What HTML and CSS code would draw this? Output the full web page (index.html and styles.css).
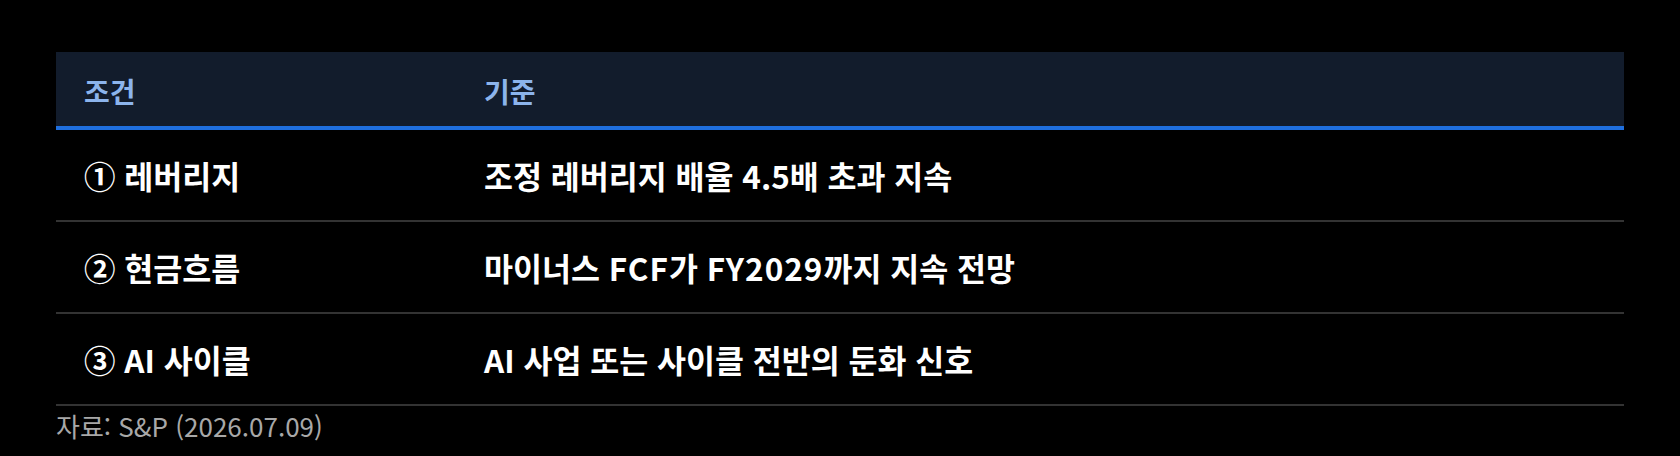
FILE: index.html
```html
<!DOCTYPE html>
<html lang="ko">
<head>
<meta charset="utf-8">
<title>조건 기준</title>
<link rel="stylesheet" href="styles.css">
</head>
<body>
<div class="wrap">
  <div class="table">
    <div class="row head">
      <div class="cell">조건</div>
      <div class="cell">기준</div>
    </div>
    <div class="row">
      <div class="cell">① 레버리지</div>
      <div class="cell">조정 레버리지 배율 4.5배 초과 지속</div>
    </div>
    <div class="row">
      <div class="cell">② 현금흐름</div>
      <div class="cell">마이너스 <span class="latin">FCF</span>가 <span class="latin">FY2029</span>까지 지속 전망</div>
    </div>
    <div class="row">
      <div class="cell">③ AI 사이클</div>
      <div class="cell">AI 사업 또는 사이클 전반의 둔화 신호</div>
    </div>
  </div>
  <p class="source">자료: S&amp;P (2026.07.09)</p>
</div>
</body>
</html>
```
FILE: styles.css
```css
html, body {
  margin: 0;
  padding: 0;
  background: #000;
}
body {
  font-family: "Noto Sans CJK KR", "Noto Sans", sans-serif;
  color: #fff;
}
.wrap {
  padding: 52px 56px 0;
}
.table {
  display: flex;
  flex-direction: column;
}
.row {
  display: grid;
  grid-template-columns: 400px 1fr;
  height: 90px;
  align-items: center;
  border-bottom: 2px solid #333;
  font-size: 31.5px;
  line-height: 40px;
  font-weight: 600;
}
.row.head {
  background: #121c2c;
  border-bottom: 4px solid #1f6fde;
  color: #8cb4ec;
  font-weight: 700;
  font-size: 28px;
  padding-top: 3px;
  box-sizing: border-box;
  height: 78px;
}
.cell {
  padding-left: 28px;
}
.latin {
  letter-spacing: 1px;
}
.source {
  margin: 0;
  padding-top: 2px;
  font-size: 26px;
  line-height: 36px;
  color: #a8a8a8;
  font-weight: 400;
}
```
